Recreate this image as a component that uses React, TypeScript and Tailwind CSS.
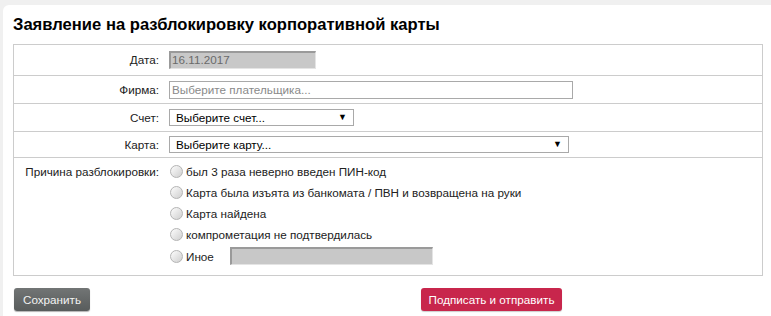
import React from 'react'

const reasons = [
  'был 3 раза неверно введен ПИН-код',
  'Карта была изъята из банкомата / ПВН и возвращена на руки',
  'Карта найдена',
  'компрометация не подтвердилась',
]

function Radio() {
  return (
    <span className="inline-block w-[13px] h-[13px] rounded-full border border-[#b4b4b4] bg-linear-to-br from-[#fdfdfd] to-[#cfcfcf] shrink-0" />
  )
}

function Row({ label, children, className = '' }: { label: string; children: React.ReactNode; className?: string }) {
  return (
    <div className={`grid grid-cols-[146px_1fr] border-b border-[#cccccc] ${className}`}>
      <div className="text-right pr-[1px]">{label}</div>
      <div className="pl-[9px]">{children}</div>
    </div>
  )
}

export default function App() {
  return (
    <div className="min-h-[316px] bg-[#f0f0f0] pt-[5px] pl-[3px] overflow-hidden font-['Liberation_Sans',Arial,sans-serif] text-[11.7px] text-[#222]">
      <div className="bg-white rounded-tl-[6px] min-h-[311px] pl-[10px] pt-[9px]">
        <h1 className="text-[16.6px] font-bold text-black leading-[22px] h-[30px]">
          Заявление на разблокировку корпоративной карты
        </h1>

        <div className="w-[750px] border border-b-0 border-[#cccccc]">
          <Row label="Дата:" className="h-[31px] items-center">
            <div className="w-[147px] h-[18px] bg-[#c8c8c8] border-t-2 border-l-2 border-[#9a9a9a] border-b border-r border-b-[#e4e4e4] border-r-[#e4e4e4] text-[#6a6a6a] leading-[14px] pl-[1px]">
              16.11.2017
            </div>
          </Row>
          <Row label="Фирма:" className="h-[28px] items-center">
            <div className="w-[404px] h-[18px] border border-[#a9a9a9] text-[#8a8a8a] leading-[16px] pl-[2px]">
              Выберите плательщика...
            </div>
          </Row>
          <Row label="Счет:" className="h-[28px] items-center">
            <div className="w-[185px] h-[17px] border border-[#a9a9a9] flex items-center justify-between pl-[6px] pr-[6px] text-black">
              <span>Выберите счет...</span>
              <span className="text-[9px]">▼</span>
            </div>
          </Row>
          <Row label="Карта:" className="h-[26px] items-center">
            <div className="w-[400px] h-[17px] border border-[#a9a9a9] flex items-center justify-between pl-[6px] pr-[6px] text-black">
              <span>Выберите карту...</span>
              <span className="text-[9px]">▼</span>
            </div>
          </Row>
          <Row label="Причина разблокировки:" className="h-[118px] pt-[3px] leading-[21px]">
            <div className="flex flex-col pl-[1px]">
              {reasons.map((r) => (
                <label key={r} className="flex items-center gap-[3px] h-[21px]">
                  <Radio />
                  <span>{r}</span>
                </label>
              ))}
              <label className="flex items-center gap-[3px] h-[22px]">
                <Radio />
                <span className="w-[41px]">Иное</span>
                <div className="w-[203px] h-[18px] bg-[#c8c8c8] border-t-2 border-l-2 border-[#9a9a9a] border-b border-r border-b-[#e4e4e4] border-r-[#e4e4e4]" />
              </label>
            </div>
          </Row>
        </div>

        <div className="flex items-start mt-[12px] pl-[1px]">
          <button className="w-[76px] h-[23px] rounded-[3px] bg-linear-to-b from-[#727575] to-[#585c5c] text-[#f2f2f2] shadow-[0_1px_1px_rgba(0,0,0,0.3)]">
            Сохранить
          </button>
          <button className="ml-[331px] w-[141px] h-[23px] rounded-[3px] bg-[#c8264c] text-white shadow-[0_1px_1px_rgba(0,0,0,0.2)]">
            Подписать и отправить
          </button>
        </div>
      </div>
    </div>
  )
}
